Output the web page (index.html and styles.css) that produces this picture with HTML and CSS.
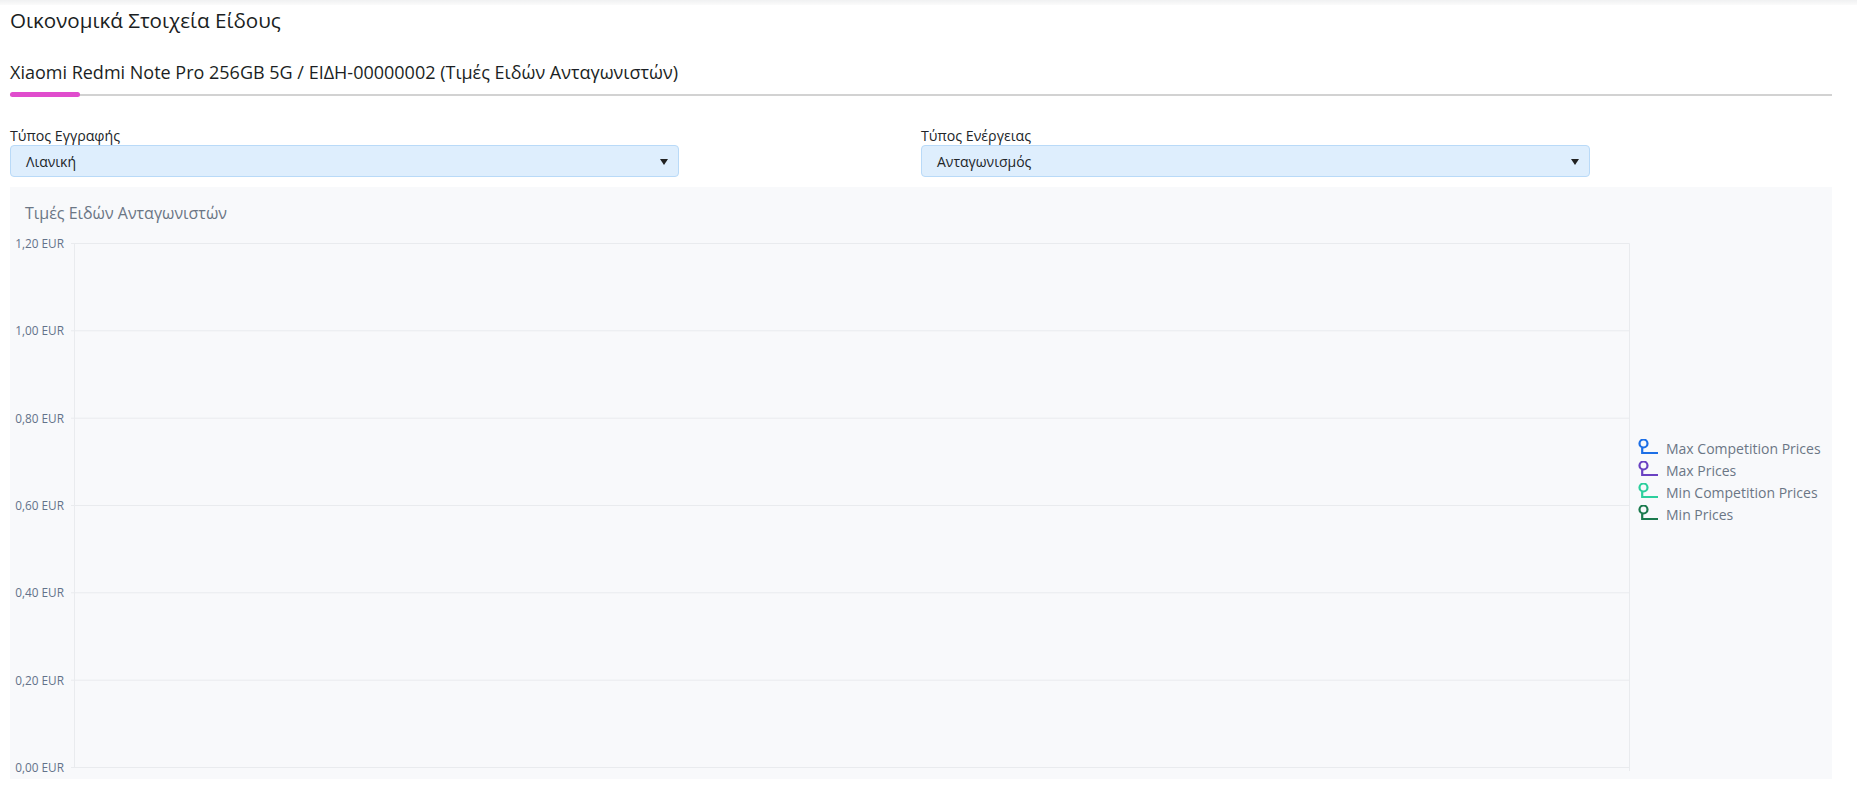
FILE: index.html
```html
<!DOCTYPE html>
<html lang="el">
<head>
<meta charset="utf-8">
<title>Οικονομικά Στοιχεία Είδους</title>
<link rel="stylesheet" href="styles.css">
</head>
<body>
<div class="topbar"></div>
<main class="page">
  <h1 class="page-title">Οικονομικά Στοιχεία Είδους</h1>
  <div class="tabs">
    <div class="tab active">Xiaomi Redmi Note Pro 256GB 5G / ΕΙΔΗ-00000002 (Τιμές Ειδών Ανταγωνιστών)</div>
  </div>
  <div class="filters">
    <div class="field">
      <div class="field-label">Τύπος Εγγραφής</div>
      <div class="select"><span>Λιανική</span><i class="caret"></i></div>
    </div>
    <div class="field">
      <div class="field-label">Τύπος Ενέργειας</div>
      <div class="select"><span>Ανταγωνισμός</span><i class="caret"></i></div>
    </div>
  </div>
  <section class="chart">
    <div class="chart-main">
      <div class="chart-title">Τιμές Ειδών Ανταγωνιστών</div>
      <svg class="plot" width="1628" height="555" viewBox="0 0 1628 555">
        <g class="grid">
          <line x1="61" y1="19.5" x2="1619.5" y2="19.5"/>
          <line x1="61" y1="106.8" x2="1619.5" y2="106.8"/>
          <line x1="61" y1="194.2" x2="1619.5" y2="194.2"/>
          <line x1="61" y1="281.5" x2="1619.5" y2="281.5"/>
          <line x1="61" y1="368.8" x2="1619.5" y2="368.8"/>
          <line x1="61" y1="456.2" x2="1619.5" y2="456.2"/>
          <line x1="61" y1="543.5" x2="1619.5" y2="543.5"/>
          <line x1="64.5" y1="19.5" x2="64.5" y2="543.5"/>
          <line x1="1619.5" y1="19.5" x2="1619.5" y2="547"/>
        </g>
        <g class="ylabels">
          <text x="54" y="23.8">1,20 EUR</text>
          <text x="54" y="111.1">1,00 EUR</text>
          <text x="54" y="198.5">0,80 EUR</text>
          <text x="54" y="285.8">0,60 EUR</text>
          <text x="54" y="373.1">0,40 EUR</text>
          <text x="54" y="460.5">0,20 EUR</text>
          <text x="54" y="547.8">0,00 EUR</text>
        </g>
      </svg>
    </div>
    <ul class="legend">
      <li><svg class="marker" width="20" height="16" viewBox="0 0 20 16" style="color:#1d6fe6"><circle cx="5.5" cy="4.5" r="4"/><path d="M4.2 8.5V14H20"/></svg><span>Max Competition Prices</span></li>
      <li><svg class="marker" width="20" height="16" viewBox="0 0 20 16" style="color:#6a42c2"><circle cx="5.5" cy="4.5" r="4"/><path d="M4.2 8.5V14H20"/></svg><span>Max Prices</span></li>
      <li><svg class="marker" width="20" height="16" viewBox="0 0 20 16" style="color:#2ccf9d"><circle cx="5.5" cy="4.5" r="4"/><path d="M4.2 8.5V14H20"/></svg><span>Min Competition Prices</span></li>
      <li><svg class="marker" width="20" height="16" viewBox="0 0 20 16" style="color:#1b7a4e"><circle cx="5.5" cy="4.5" r="4"/><path d="M4.2 8.5V14H20"/></svg><span>Min Prices</span></li>
    </ul>
  </section>
</main>
</body>
</html>
```
FILE: styles.css
```css
* { box-sizing: border-box; }
html, body { margin: 0; padding: 0; background: #fff; }
body {
  font-family: "Open Sans", "Noto Sans", sans-serif;
  color: #212529;
  width: 1857px;
  height: 800px;
  overflow: hidden;
}
.topbar {
  height: 5px;
  background: linear-gradient(#f0f1f2, #fbfbfb);
}
.page {
  padding: 0 25px 0 10px;
}
.page-title {
  margin: 0;
  padding-top: 1px;
  font-size: 20.6px;
  line-height: 28px;
  font-weight: 400;
  color: #1a1e23;
}
.tabs {
  margin-top: 26px;
  display: flex;
  border-bottom: 2px solid #d2d2d2;
}
.tab {
  position: relative;
  font-size: 18px;
  line-height: 24px;
  font-weight: 500;
  color: #1b1f24;
  padding-bottom: 10px;
}
.tab.active::after {
  content: "";
  position: absolute;
  left: 0;
  bottom: -3px;
  width: 70px;
  height: 5px;
  border-radius: 3px;
  background: #e04ccd;
}
.filters {
  display: grid;
  grid-template-columns: 911px 911px;
  margin-top: 30px;
}
.field-label {
  font-size: 14.2px;
  line-height: 19px;
  color: #212529;
}
.select {
  width: 669px;
  height: 32px;
  display: flex;
  align-items: center;
  justify-content: space-between;
  padding: 0 10px 0 15px;
  background: #deeefd;
  border: 1px solid #b9daf8;
  border-radius: 4px;
  font-size: 14px;
  color: #212529;
}
.caret {
  width: 0;
  height: 0;
  border-left: 4px solid transparent;
  border-right: 4px solid transparent;
  border-top: 6px solid #222;
  margin-top: 2px;
}
.chart {
  margin-top: 10px;
  height: 592px;
  background: #f8f9fb;
  display: flex;
  align-items: center;
}
.chart-main {
  width: 1628px;
  align-self: stretch;
  display: flex;
  flex-direction: column;
}
.chart-title {
  padding: 15px 0 0 15px;
  font-size: 16px;
  line-height: 22px;
  color: #6b7685;
}
.plot { display: block; }
.grid line {
  stroke: #e9ebee;
  stroke-width: 1;
}
.ylabels text {
  font-family: "Open Sans", "Noto Sans", sans-serif;
  font-size: 11.8px;
  fill: #63728a;
  text-anchor: end;
}
.legend {
  list-style: none;
  margin: -4px 0 0 0;
  padding: 0;
}
.legend li {
  display: flex;
  align-items: center;
  height: 22px;
  font-size: 14px;
  color: #6b7685;
}
.marker {
  display: block;
  margin-right: 8px;
  margin-top: -3px;
  fill: none;
  stroke: currentColor;
  stroke-width: 2.2;
}
```
